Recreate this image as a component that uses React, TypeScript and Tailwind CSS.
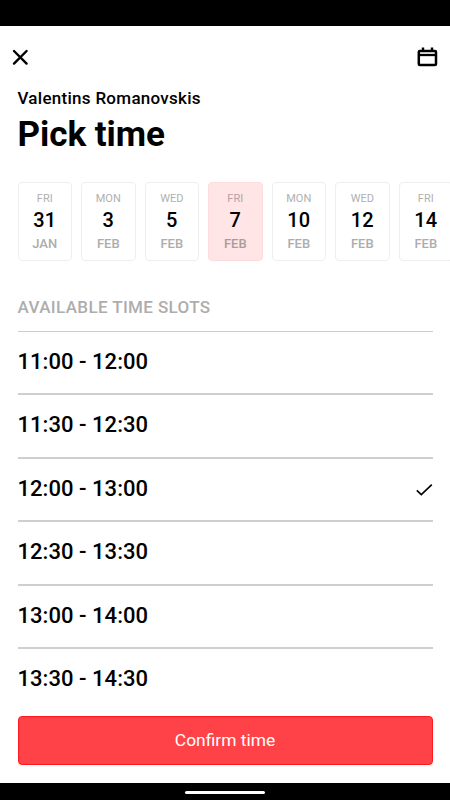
const days = [
  { weekday: 'FRI', day: 31, month: 'JAN' },
  { weekday: 'MON', day: 3, month: 'FEB' },
  { weekday: 'WED', day: 5, month: 'FEB' },
  { weekday: 'FRI', day: 7, month: 'FEB' },
  { weekday: 'MON', day: 10, month: 'FEB' },
  { weekday: 'WED', day: 12, month: 'FEB' },
  { weekday: 'FRI', day: 14, month: 'FEB' },
];

const slots = [
  '11:00 - 12:00',
  '11:30 - 12:30',
  '12:00 - 13:00',
  '12:30 - 13:30',
  '13:00 - 14:00',
  '13:30 - 14:30',
];

const selectedDay = 7;
const selectedSlot = '12:00 - 13:00';

function DayCard({ weekday, day, month }: { weekday: string; day: number; month: string }) {
  const active = day === selectedDay;
  return (
    <button
      className={`flex h-[79px] w-[54.5px] shrink-0 flex-col items-center rounded-[4px] border pt-[9px] ${
        active ? 'border-[#ffdcdc] bg-[#ffe5e5]' : 'border-[#eeeef0] bg-white'
      }`}
    >
      <span className={`text-[11px] leading-[14px] ${active ? 'text-[#b5a3a3]' : 'text-[#b0b0b0]'}`}>{weekday}</span>
      <span className="text-[20px] leading-[28px] font-medium tracking-[0.2px] text-black">{day}</span>
      <span className={`mt-[2px] text-[13px] leading-[16px] font-medium ${active ? 'text-[#ab9c9c]' : 'text-[#adadad]'}`}>
        {month}
      </span>
    </button>
  );
}

export default function App() {
  return (
    <div className="flex h-[800px] w-[450px] flex-col overflow-hidden bg-white font-['Roboto',sans-serif] text-black">
      <div className="h-[26px] shrink-0 bg-black" />

      <header className="flex h-[62px] shrink-0 items-center justify-between pr-[11px] pl-[8px]">
        <svg viewBox="0 0 24 24" className="size-6">
          <path d="M6 6l12.6 12.6M18.6 6L6 18.6" stroke="black" strokeWidth="2.4" strokeLinecap="round" />
        </svg>
        <svg viewBox="0 0 24 24" className="size-6">
          <rect x="3.8" y="6" width="17.2" height="14" rx="1" fill="none" stroke="black" strokeWidth="2.5" />
          <path d="M4 10h17" stroke="black" strokeWidth="2.3" />
          <path d="M8 2.4v3M17 2.4v3" stroke="black" strokeWidth="2.4" />
        </svg>
      </header>

      <main className="flex min-h-0 flex-1 flex-col pl-[17.5px]">
        <p className="text-[17px] leading-[21px] font-medium tracking-[0.28px]">Valentins Romanovskis</p>
        <h1 className="mt-px text-[35px] leading-[50px] font-bold tracking-[-0.05px]">Pick time</h1>

        <div className="mt-[22px] flex gap-[9px] overflow-hidden">
          {days.map((d) => (
            <DayCard key={d.day} {...d} />
          ))}
        </div>

        <h2 className="mt-[35px] mr-[17.5px] h-[36px] border-b border-[#ccc] text-[17px] leading-[22px] font-medium tracking-[0.37px] text-[#adadad]">
          AVAILABLE TIME SLOTS
        </h2>

        <ul className="mr-[17.5px] h-[375px]">
          {slots.map((slot) => (
            <li
              key={slot}
              className="flex h-[63.4px] items-center justify-between border-b-2 border-[#cfcfd2] text-[22px] font-medium last:border-transparent"
            >
              <span className="pb-[2.5px] tracking-[0.04px]">{slot}</span>
              {slot === selectedSlot && (
                <svg viewBox="0 0 18 14" className="mt-px h-[14px] w-[18px]">
                  <path d="M1.8 7.4l4.5 4.2L16.8 1.6" fill="none" stroke="black" strokeWidth="1.6" />
                </svg>
              )}
            </li>
          ))}
        </ul>
      </main>

      <footer className="shrink-0 px-[17.5px] pb-[18px]">
        <button className="h-[49px] w-full rounded-[4px] border border-[#ff1a1f] bg-[#ff4248] text-[17.4px] text-white">
          Confirm time
        </button>
      </footer>

      <div className="flex h-[17px] shrink-0 items-center justify-center bg-black">
        <div className="mt-px h-[3px] w-[80px] rounded-full bg-white" />
      </div>
    </div>
  );
}
